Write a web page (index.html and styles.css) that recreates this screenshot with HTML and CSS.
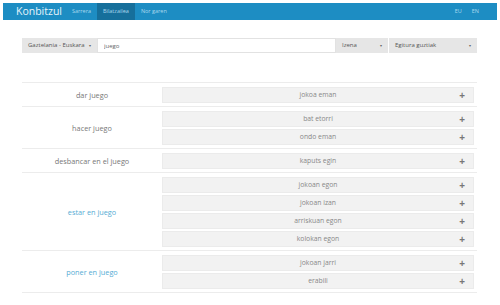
FILE: index.html
```html
<!DOCTYPE html>
<html lang="eu">
<head>
    <meta charset="UTF-8">
    <title>Konbitzul</title>
    <link rel="stylesheet" href="styles.css">
</head>
<body>

<nav class="navbar">
    <a class="brand" href="#">Konbitzul</a>
    <ul class="nav-links">
        <li><a href="#">Sarrera</a></li>
        <li class="active"><a href="#">Bilatzailea</a></li>
        <li><a href="#">Nor garen</a></li>
    </ul>
    <ul class="nav-lang">
        <li><a href="#">EU</a></li>
        <li><a href="#">EN</a></li>
    </ul>
</nav>

<div class="container">
    <form class="search-row">
        <div class="select lang-select">Gaztelania - Euskara <span class="caret">&#9662;</span></div>
        <input type="text" class="search-input" value="juego">
        <div class="select type-select">Izena <span class="caret">&#9662;</span></div>
        <div class="select struct-select">Egitura guztiak <span class="caret">&#9662;</span></div>
    </form>

    <div class="results">
        <div class="result-row">
            <div class="term">dar juego</div>
            <div class="translations">
                <div class="trans">jokoa eman<span class="plus">+</span></div>
            </div>
        </div>
        <div class="result-row">
            <div class="term">hacer juego</div>
            <div class="translations">
                <div class="trans">bat etorri<span class="plus">+</span></div>
                <div class="trans">ondo eman<span class="plus">+</span></div>
            </div>
        </div>
        <div class="result-row">
            <div class="term">desbancar en el juego</div>
            <div class="translations">
                <div class="trans">kaputs egin<span class="plus">+</span></div>
            </div>
        </div>
        <div class="result-row">
            <div class="term link">estar en juego</div>
            <div class="translations">
                <div class="trans">jokoan egon<span class="plus">+</span></div>
                <div class="trans">jokoan izan<span class="plus">+</span></div>
                <div class="trans">arriskuan egon<span class="plus">+</span></div>
                <div class="trans">kolokan egon<span class="plus">+</span></div>
            </div>
        </div>
        <div class="result-row">
            <div class="term link">poner en juego</div>
            <div class="translations">
                <div class="trans">jokoan jarri<span class="plus">+</span></div>
                <div class="trans">erabili<span class="plus">+</span></div>
            </div>
        </div>
    </div>
</div>

</body>
</html>
```

FILE: styles.css
```css
body {
    margin: 0;
    font-family: "Open Sans", "DejaVu Sans", sans-serif;
    background-color: #fff;
    color: #777;
}
a {
    text-decoration: none;
    color: inherit;
}
ul {
    list-style: none;
    margin: 0;
    padding: 0;
}
.navbar {
    margin: 3px 3px 0 3px;
    height: 17px;
    background-color: #1d8dc3;
    display: flex;
    align-items: stretch;
}
.brand {
    color: #e6f4fb;
    font-size: 10.5px;
    line-height: 17px;
    padding: 0 4px 0 13px;
}
.nav-links, .nav-lang {
    display: flex;
}
.nav-links li a, .nav-lang li a {
    display: block;
    font-size: 5.5px;
    line-height: 17px;
    padding: 0 6px;
    color: #a9d8ee;
}
.nav-links li.active a {
    background-color: #166f9b;
}
.nav-lang {
    margin-left: auto;
    margin-right: 13px;
}
.nav-lang li a {
    padding: 0 5px;
}
.container {
    margin: 0 23px 0 22px;
}
.search-row {
    display: flex;
    margin-top: 18px;
    height: 15px;
}
.select {
    background-color: #e6e6e6;
    color: #555;
    font-size: 6px;
    line-height: 15px;
    padding: 0 6px;
    display: flex;
    justify-content: space-between;
    box-sizing: border-box;
}
.caret {
    font-size: 4px;
    color: #666;
}
.lang-select {
    width: 75px;
}
.search-input {
    flex: 1;
    height: 15px;
    box-sizing: border-box;
    border: 1px solid #e2e2e2;
    font-family: inherit;
    font-size: 6px;
    color: #666;
    padding: 0 6px;
    margin: 0;
}
.type-select {
    width: 53px;
    border-right: 1px solid #fff;
}
.struct-select {
    width: 88px;
}
.results {
    margin-top: 29px;
    width: 455px;
    border-top: 1px solid #ececec;
}
.result-row {
    display: flex;
    border-bottom: 1px solid #ececec;
    padding: 3.5px 3px 3.5px 0;
}
.term {
    width: 140px;
    display: flex;
    align-items: center;
    justify-content: center;
    font-size: 7.3px;
    color: #777;
}
.term.link {
    color: #55acd4;
}
.translations {
    flex: 1;
    display: flex;
    flex-direction: column;
    gap: 2px;
}
.trans {
    position: relative;
    height: 16px;
    box-sizing: border-box;
    background-color: #f2f2f2;
    border: 1px solid #ebebeb;
    text-align: center;
    font-size: 6.8px;
    line-height: 14px;
    color: #888;
}
.plus {
    position: absolute;
    right: 8px;
    top: 0;
    font-size: 10px;
    font-weight: bold;
    color: #777;
}
```
